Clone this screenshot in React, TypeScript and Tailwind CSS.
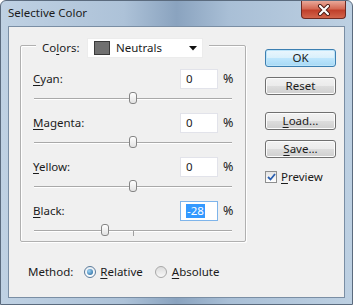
import React from 'react';

const font = { fontFamily: '"Segoe UI", "Noto Sans", "Liberation Sans", sans-serif' };

function Key({ k }: { k: string }) {
  return <span className="underline underline-offset-[2px] decoration-[1px]">{k}</span>;
}

function Slider({ value, tick }: { value: number; tick?: boolean }) {
  // value is -100..100, thumb center sits on the track accordingly
  const pct = 50 + value / 2;
  return (
    <div className="relative ml-[1px] mt-[3px] h-[13px] w-[198px]">
      <div className="absolute left-0 right-0 top-[6px] h-[2px] border-t border-[#a9a9a9] border-b border-b-white" />
      {tick && <div className="absolute left-[99px] top-[7px] h-[5px] w-px bg-[#a0a0a0]" />}
      <div
        className="absolute top-0 h-[12px] w-[8px] -translate-x-1/2 rounded-[3px] border border-[#858585] bg-[linear-gradient(#ffffff,#e2e2e2)]"
        style={{ left: `${pct}%` }}
      />
    </div>
  );
}

function Row({
  pre,
  k,
  post,
  value,
  selected,
  tick,
}: {
  pre: string;
  k: string;
  post: string;
  value: number;
  selected?: boolean;
  tick?: boolean;
}) {
  return (
    <div className="mt-[8px] first:mt-[11px]">
      <div className="flex h-[20px] items-center">
        <span className="w-[147px]">
          {pre}
          <Key k={k} />
          {post}
        </span>
        <div
          className={`flex h-[20px] w-[38px] items-center bg-white pl-[5px] border ${
            selected ? 'border-[#7eb4ea]' : 'border-[#e2e3ea]'
          }`}
        >
          {selected ? <span className="bg-[#3399ff] px-px leading-[14px] text-white">{value}</span> : value}
        </div>
        <span className="ml-[5px] text-[12.5px]">%</span>
      </div>
      <Slider value={value} tick={tick} />
    </div>
  );
}

function Button({ children, primary }: { children: React.ReactNode; primary?: boolean }) {
  return (
    <div
      className={`flex h-[18px] w-[71px] items-center justify-center rounded-[3px] border ${
        primary
          ? 'border-[#3c7fb1] bg-[linear-gradient(#eaf6fd,#d9f0fc_50%,#bee6fd_51%,#a7d9f5)] shadow-[inset_0_0_0_1px_#bde4f9]'
          : 'border-[#707070] bg-[linear-gradient(#f2f2f2,#ebebeb_50%,#dddddd_51%,#cfcfcf)] shadow-[inset_0_0_0_1px_#fcfcfc]'
      }`}
    >
      {children}
    </div>
  );
}

export default function App() {
  return (
    <div
      style={font}
      className="flex h-[305px] w-[353px] flex-col overflow-hidden rounded-t-[6px] border border-[#5b6b7e] bg-[linear-gradient(90deg,#bfd1e3,#adc2d8_35%,#8aa3bf_50%,#a9bfd6_65%,#bdd0e2)] text-[11.5px] leading-none text-[#1b1b1b]"
    >
      <div className="flex h-[25px] shrink-0 items-start">
        <span className="ml-[7px] mt-[6px]">Selective Color</span>
        <div className="ml-auto mr-[6px] flex h-[18px] w-[45px] items-center justify-center rounded-b-[4px] border border-t-0 border-[#6e2a22] bg-[linear-gradient(#e9a899,#d46a55_45%,#c0402b_55%,#d2654c)]">
          <svg width="14" height="12" viewBox="0 0 14 12">
            <path d="M3 2 L11 10 M11 2 L3 10" stroke="#4a1a14" strokeWidth="4" strokeLinecap="round" />
            <path d="M3 2 L11 10 M11 2 L3 10" stroke="#ffffff" strokeWidth="2.2" strokeLinecap="round" />
          </svg>
        </div>
      </div>

      <div className="mx-[7px] mb-[6px] flex flex-1 border border-[#7a8ea4] bg-[#f0f0f0]">
        <div className="flex w-[246px] flex-col pl-[11px] pt-[18px]">
          <div className="h-[197px] w-[226px] rounded-[2px] border border-[#b0b0b0] shadow-[inset_1px_1px_0_#fff,1px_1px_0_#fff]">
            <div className="ml-[15px] -mt-[8px] flex h-[20px] w-[173px] items-center bg-[#f0f0f0] px-[6px]">
              <span className="w-[45px]">
                Co
                <Key k="l" />
                ors:
              </span>
              <div className="flex h-[20px] w-[116px] items-center border border-[#ececec] bg-white pl-[6px]">
                <div className="h-[14px] w-[16px] border border-[#3a3a3a] bg-[#707070]" />
                <span className="ml-[6px]">Neutrals</span>
                <svg className="ml-auto mr-[5px]" width="8" height="5" viewBox="0 0 8 5">
                  <path d="M0 0 H8 L4 4.5 Z" fill="#111" />
                </svg>
              </div>
            </div>
            <div className="pl-[12px]">
              <Row pre="" k="C" post="yan:" value={0} />
              <Row pre="" k="M" post="agenta:" value={0} />
              <Row pre="" k="Y" post="ellow:" value={0} />
              <Row pre="" k="B" post="lack:" value={-28} selected tick />
            </div>
          </div>

          <div className="ml-[8px] mt-[22px] flex h-[16px] items-center">
            <span>Method:</span>
            <div className="ml-[11px] flex h-[12px] w-[12px] items-center justify-center rounded-full border border-[#5a7a9a] bg-[linear-gradient(#e8eef4,#ffffff)]">
              <div className="h-[6px] w-[6px] rounded-full bg-[radial-gradient(circle_at_35%_35%,#9fd4f5,#1d5f95)]" />
            </div>
            <span className="ml-[4px]">
              <Key k="R" />
              elative
            </span>
            <div className="ml-[12px] h-[12px] w-[12px] rounded-full border border-[#a8a8a8] bg-[linear-gradient(#dcdcdc,#f8f8f8)]" />
            <span className="ml-[5px]">
              <Key k="A" />
              bsolute
            </span>
          </div>
        </div>

        <div className="ml-[10px] flex flex-col pt-[22px]">
          <Button primary>OK</Button>
          <div className="mt-[10px]">
            <Button>Reset</Button>
          </div>
          <div className="mt-[17px]">
            <Button>
              <span>
                <Key k="L" />
                oad...
              </span>
            </Button>
          </div>
          <div className="mt-[10px]">
            <Button>
              <span>
                <Key k="S" />
                ave...
              </span>
            </Button>
          </div>
          <div className="mt-[13px] flex items-center">
            <div className="flex h-[12px] w-[12px] items-center justify-center border border-[#8e8f8f] bg-[linear-gradient(#e4e4e4,#ffffff)]">
              <svg width="9" height="8" viewBox="0 0 9 8">
                <path d="M1 4 L3.5 6.5 L8 1" stroke="#2a5fb0" strokeWidth="1.8" fill="none" />
              </svg>
            </div>
            <span className="ml-[4px]">
              <Key k="P" />
              review
            </span>
          </div>
        </div>
      </div>
    </div>
  );
}
